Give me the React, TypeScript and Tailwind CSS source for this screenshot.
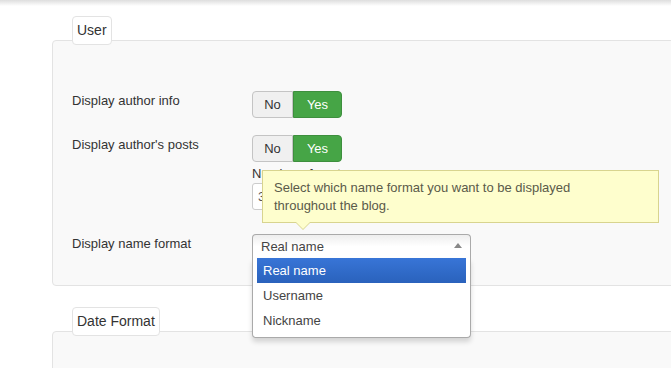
import { useState } from 'react';

type Option = { value: string; label: string };

const nameFormats: Option[] = [
  { value: 'real', label: 'Real name' },
  { value: 'username', label: 'Username' },
  { value: 'nickname', label: 'Nickname' },
];

function Toggle({ value, onChange }: { value: boolean; onChange: (v: boolean) => void }) {
  return (
    <div className="flex h-[27px] text-[13px] leading-[18px]">
      <button
        onClick={() => onChange(false)}
        className={`w-[41px] rounded-l-[4px] border ${
          value ? 'border-[#c4c4c4] bg-[#f0f0f0] text-[#333]' : 'border-[#bd362f] bg-[#bd362f] text-white'
        }`}
      >
        No
      </button>
      <button
        onClick={() => onChange(true)}
        className={`w-[49px] rounded-r-[4px] border ${
          value ? 'border-[#3e8f3e] bg-[#46a546] text-white' : 'border-[#c4c4c4] bg-[#f0f0f0] text-[#333]'
        }`}
      >
        Yes
      </button>
    </div>
  );
}

function Legend({ children }: { children: string }) {
  return (
    <div className="relative z-10 ml-[20px] flex h-[29px] w-fit items-center rounded-[4px] border border-[#e3e3e3] bg-white px-[4px] text-[14px] text-[#333]">
      {children}
    </div>
  );
}

export default function App() {
  const [authorInfo, setAuthorInfo] = useState(true);
  const [authorPosts, setAuthorPosts] = useState(true);
  const [nameFormat, setNameFormat] = useState('real');
  const current = nameFormats.find((o) => o.value === nameFormat);

  return (
    <div className="relative h-[368px] w-[671px] overflow-hidden bg-white font-['Liberation_Sans',Arial,sans-serif]">
      <div className="h-[6px] bg-gradient-to-b from-[#dedede] to-white" />

      <div className="mt-[10px] pl-[52px]">
        <Legend>User</Legend>
        <div className="-mt-[5px] h-[246px] w-[660px] rounded-[4px] border border-[#e3e3e3] bg-[#f9f9f9] pl-[19px] pt-[49px]">
          <div className="flex items-start">
            <div className="w-[180px] pt-[2px] text-[13px] leading-[18px] text-[#333]">Display author info</div>
            <div className="mt-[1px]">
              <Toggle value={authorInfo} onChange={setAuthorInfo} />
            </div>
          </div>

          <div className="mt-[16px] flex items-start">
            <div className="w-[180px] pt-[2px] text-[13px] leading-[18px] text-[#333]">Display author's posts</div>
            <div className="mt-[1px]">
              <Toggle value={authorPosts} onChange={setAuthorPosts} />
              <div className="mt-[3px] text-[13px] leading-[18px] text-[#333]">Number of posts</div>
              <div className="flex h-[27px] w-[206px] items-center rounded-[3px] border border-[#ccc] bg-white px-[5px] text-[13px] text-[#555]">
                3
              </div>
            </div>
          </div>

          <div className="mt-[23px] flex items-start">
            <div className="w-[180px] pt-[2px] text-[13px] leading-[18px] text-[#333]">Display name format</div>
            <div className="relative mt-[1px] w-[219px]">
              <div className="flex h-[24px] items-center justify-between rounded-t-[4px] border border-b-0 border-[#aaa] bg-gradient-to-b from-[#eeeeee] via-white to-white pl-[8px] pr-[8px] text-[13px] text-[#444]">
                <span>{current?.label}</span>
                <span className="mt-[-2px] h-0 w-0 border-x-[4px] border-b-[5px] border-x-transparent border-b-[#888]" />
              </div>
              <ul className="absolute left-0 top-full z-20 w-[219px] rounded-b-[4px] border border-t-0 border-[#aaa] bg-white pb-[4px] pl-[4px] pr-[4px] text-[13px] shadow-[0_4px_5px_rgba(0,0,0,0.15)]">
                {nameFormats.map((o) => (
                  <li
                    key={o.value}
                    onClick={() => setNameFormat(o.value)}
                    className={`flex h-[25px] items-center pl-[6px] ${
                      o.value === nameFormat
                        ? 'bg-gradient-to-b from-[#3875d7] to-[#2a62bc] text-white'
                        : 'text-[#444]'
                    }`}
                  >
                    {o.label}
                  </li>
                ))}
              </ul>
            </div>
          </div>
        </div>

        <div className="mt-[21px]">
          <Legend>Date Format</Legend>
          <div className="-mt-[5px] h-[60px] w-[660px] rounded-[4px] border border-[#e3e3e3] bg-[#f9f9f9]" />
        </div>
      </div>

      {/* tooltip for the name format field */}
      <div className="absolute left-[262px] top-[170px] z-30 h-[53px] w-[397px] border border-[#d8d48f] bg-[#fefecd] px-[11px] pt-[8px] text-[13px] leading-[18px] text-[#5a5a4a]">
        Select which name format you want to be displayed
        <br />
        throughout the blog.
        <span className="absolute left-[32px] top-full h-0 w-0 border-x-[8px] border-t-[8px] border-x-transparent border-t-[#d8d48f]" />
        <span className="absolute left-[33px] top-full h-0 w-0 border-x-[7px] border-t-[7px] border-x-transparent border-t-[#fefecd]" />
      </div>
    </div>
  );
}
